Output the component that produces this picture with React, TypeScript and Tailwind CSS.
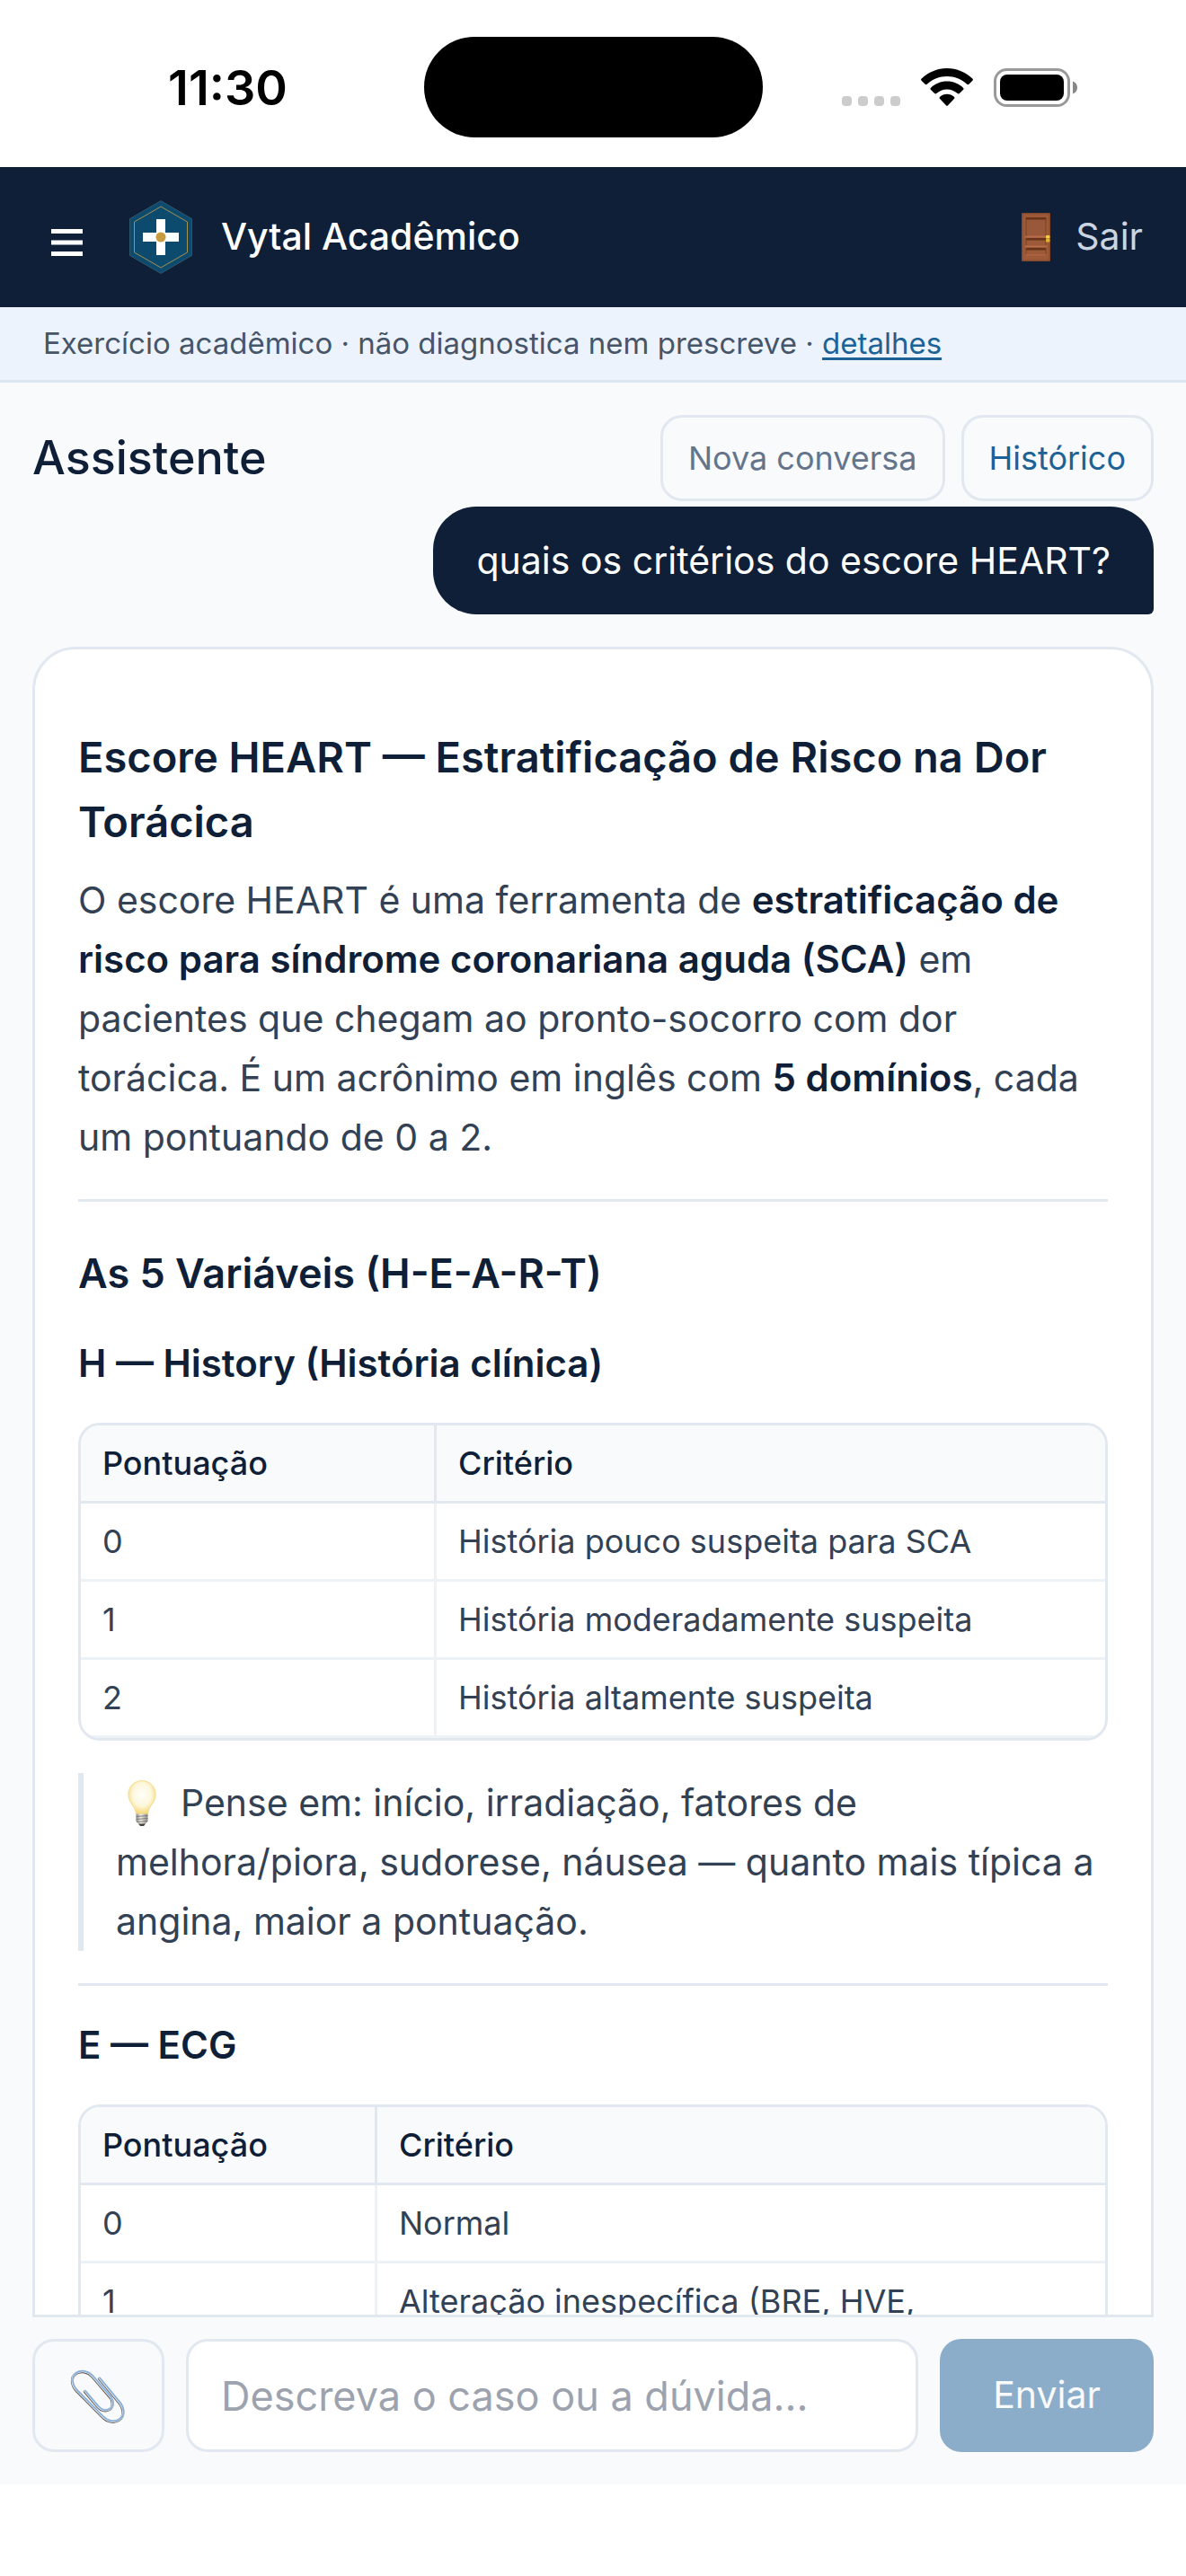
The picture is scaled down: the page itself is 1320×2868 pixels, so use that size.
import { useState } from "react"

type Row = [string, string]

const historyRows: Row[] = [
    ["0", "História pouco suspeita para SCA"],
    ["1", "História moderadamente suspeita"],
    ["2", "História altamente suspeita"],
]

const ecgRows: Row[] = [
    ["0", "Normal"],
    ["1", "Alteração inespecífica (BRE, HVE,"],
]

function StatusBar() {
    return (
        <div className="flex h-[186px] shrink-0 items-center justify-between bg-white pt-2">
            <div className="w-[471px] pl-9 text-center text-[54px] font-semibold text-black">11:30</div>
            <div className="h-[112px] w-[377px] rounded-full bg-black" />
            <div className="flex w-[471px] items-center justify-center gap-[23px] pr-8">
                <svg width="65" height="42" viewBox="0 0 65 42" fill="#cccccc">
                    <rect x="0" y="31" width="11" height="11" rx="4" />
                    <rect x="18" y="31" width="11" height="11" rx="4" />
                    <rect x="36" y="31" width="11" height="11" rx="4" />
                    <rect x="54" y="31" width="11" height="11" rx="4" />
                </svg>
                <svg width="58" height="42" viewBox="0 0 58 42" fill="#000">
                    <path d="M29 0C18 0 8 4.500 0.700 11.500c-.8.800-.8 1.600-.1 2.300l4 4c.6.600 1.500.600 2.200 0C12.800 12.200 20.500 9 29 9s16.200 3.200 22.200 8.800c.7.600 1.600.600 2.200 0l4-4c.7-.7.7-1.500-.1-2.300C50 4.500 40 0 29 0z" />
                    <path d="M29 14.500c-7 0-13.300 2.700-18 7.200-.7.700-.7 1.500 0 2.200l4.200 4.100c.6.600 1.400.600 2.100 0 3.100-2.900 7.200-4.600 11.700-4.600s8.600 1.700 11.700 4.600c.7.600 1.500.600 2.100 0l4.200-4.100c.7-.7.7-1.500 0-2.200-4.700-4.500-11-7.200-18-7.200z" />
                    <path d="M29 28.800c-3 0-5.700 1.100-7.800 2.900-.8.700-.8 1.500-.1 2.200l6.800 7.300c.7.700 1.500.700 2.200 0l6.800-7.300c.7-.7.7-1.500-.1-2.200-2.100-1.800-4.800-2.900-7.800-2.900z" />
                </svg>
                <svg width="94" height="43" viewBox="0 0 94 43">
                    <rect x="1.500" y="1.500" width="82" height="40" rx="13" fill="none" stroke="#999" strokeWidth="3" />
                    <rect x="7" y="7" width="71" height="29" rx="8" fill="#000" />
                    <path d="M88 14.500c3.500 1.200 5 4 5 7s-1.500 5.800-5 7z" fill="#888" />
                </svg>
            </div>
        </div>
    )
}

function Logo() {
    return (
        <svg width="70" height="82" viewBox="0 0 70 82">
            <path d="M35 0.500 69.500 20.500v41L35 81.500 0.500 61.500v-41z" fill="#0c4a6e" stroke="#4a6a7c" strokeWidth="0.600" />
            <path d="M35 7 64.500 24v34L35 75 5.500 58V24z" fill="none" stroke="#a8914f" strokeWidth="1" />
            <path d="M30 21h10v15h15v10H40v15H30V46H15V36h15z" fill="#fff" />
            <circle cx="35" cy="41" r="5.500" fill="#c69c3e" />
        </svg>
    )
}

function DoorIcon() {
    return (
        <svg width="32" height="54" viewBox="0 0 32 54">
            <rect width="32" height="54" rx="1" fill="#88492c" />
            <rect x="1.500" y="1.500" width="29" height="51" fill="#9c5a38" />
            <rect x="5" y="5" width="22" height="21" fill="#99583a" />
            <rect x="5" y="5" width="22" height="2.500" fill="#673319" />
            <rect x="4" y="25.500" width="24" height="2" fill="#b86d49" />
            <rect x="5" y="28" width="22" height="2.500" fill="#673319" />
            <rect x="4" y="36.500" width="24" height="1.500" fill="#b86d49" />
            <rect x="5" y="39" width="22" height="2.500" fill="#673319" />
            <rect x="5" y="46" width="22" height="1.500" fill="#b06542" />
            <path d="M5 5v21M27 5v21M5 28v8M27 28v8M5 39v7M27 39v7" stroke="#75401f" strokeWidth="0.800" />
            <rect x="27" y="25" width="4.500" height="3.500" rx="1" fill="#f4cf3c" />
            <rect x="27" y="29" width="4.500" height="3.500" rx="1" fill="#e0b22c" />
        </svg>
    )
}

function BulbIcon() {
    return (
        <svg className="ml-[13px] mr-[27px] inline-block align-[-11px]" width="32" height="51" viewBox="0 0 32 51">
            <defs>
                <radialGradient id="glass" cx="0.5" cy="0.42" r="0.58">
                    <stop offset="0" stopColor="#fffffa" />
                    <stop offset="0.6" stopColor="#fdf7dc" />
                    <stop offset="1" stopColor="#f4d774" />
                </radialGradient>
                <linearGradient id="screw" x1="0" x2="1" y1="0" y2="0">
                    <stop offset="0" stopColor="#8d8984" />
                    <stop offset="0.4" stopColor="#f0eeea" />
                    <stop offset="1" stopColor="#8d8984" />
                </linearGradient>
            </defs>
            <path d="M16 .5C7.400 .5.800 7.200.8 15.800c0 5.200 2.200 8.600 4.800 12.200 2.400 3.300 3.300 6 3.900 9.500h13c.6-3.500 1.500-6.200 3.900-9.500 2.600-3.600 4.800-7 4.800-12.200C31.200 7.200 24.600.5 16 .5z" fill="url(#glass)" stroke="#f2d987" strokeWidth="0.800" />
            <path d="M9.500 37.500h13v8.500l-3.500 3h-6l-3.500-3z" fill="url(#screw)" />
            <path d="M9.500 40.500l13-1M9.500 43.500l13-1M10 46.500l12-1" stroke="#77736e" strokeWidth="0.900" />
            <path d="M12 48.500h8l-2 2.500h-4z" fill="#45423f" />
        </svg>
    )
}

function ClipIcon() {
    const wire = "M150 83 219 166C233 184 234 208 218 220C200 233 176 227 161 211L73 122C57 104 55 78 72 66C89 55 113 60 127 76L188 147C198 160 197 178 184 186C170 194 155 188 146 178L102 126"
    return (
        <svg width="64" height="64" viewBox="52 45 192 192" fill="none" strokeLinecap="round" strokeLinejoin="round">
            <path d={wire} stroke="#5b5652" strokeWidth="9" transform="translate(-1 2)" />
            <path d={wire} stroke="#dfe5ec" strokeWidth="8" />
            <path d={wire} stroke="#86aedb" strokeWidth="5" transform="translate(1 -1)" />
        </svg>
    )
}

function ScoreTable({ rows, firstCol }: { rows: Row[]; firstCol: string }) {
    return (
        <div className="my-9 overflow-hidden rounded-3xl border-3 border-[#e2e8f0]">
            <table className="w-full border-separate border-spacing-0 text-left text-[36px] leading-[54px]">
                <thead className="bg-[#f8fafc] text-[#0f1f38]">
                    <tr>
                        <th className={`${firstCol} border-r-3 border-b-3 border-[#e2e8f0] px-6 py-[15px] font-medium`}>Pontuação</th>
                        <th className="border-b-3 border-[#e2e8f0] px-6 py-[15px] font-medium">Critério</th>
                    </tr>
                </thead>
                <tbody>
                    {rows.map(([score, text]) => (
                        <tr key={score}>
                            <td className="border-r-3 border-b-3 border-[#edf2f7] px-6 py-[15px]">{score}</td>
                            <td className="border-b-3 border-[#edf2f7] px-6 py-[15px]">{text}</td>
                        </tr>
                    ))}
                </tbody>
            </table>
        </div>
    )
}

function Answer() {
    return (
        <article className="mt-9 rounded-[48px] border-3 border-[#e2e8f0] bg-white px-12 pt-[84px] pb-12 text-[41px] leading-[66px] text-[#334155]">
            <h2 className="mb-[18px] text-[47px] leading-[72px] font-semibold text-[#0f1f38]">
                Escore HEART — Estratificação de Risco na Dor Torácica
            </h2>
            <p>
                O escore HEART é uma ferramenta de <strong className="text-[42px] font-semibold text-[#0f1f38]">estratificação de risco para síndrome coronariana aguda (SCA)</strong> em pacientes que chegam ao pronto-socorro com dor torácica. É um acrônimo em inglês com <strong className="text-[42px] font-semibold text-[#0f1f38]">5 domínios</strong>, cada um pontuando de 0 a 2.
            </p>
            <hr className="my-9 border-t-3 border-[#e2e8f0]" />
            <h3 className="mt-11 mb-[34px] text-[45px] leading-[72px] font-semibold text-[#0f1f38]">As 5 Variáveis (H-E-A-R-T)</h3>
            <h4 className="text-[42px] leading-[60px] font-semibold text-[#0f1f38]">H — History (História clínica)</h4>
            <ScoreTable rows={historyRows} firstCol="w-[396px]" />
            <blockquote className="border-l-6 border-[#e2e8f0] pl-9">
                <BulbIcon />Pense em: início, irradiação, fatores de melhora/piora, sudorese, náusea — quanto mais típica a angina, maior a pontuação.
            </blockquote>
            <hr className="my-9 border-t-3 border-[#e2e8f0]" />
            <h4 className="text-[42px] leading-[60px] font-semibold text-[#0f1f38]">E — ECG</h4>
            <ScoreTable rows={ecgRows} firstCol="w-[330px]" />
        </article>
    )
}

export default function App() {
    const [message, setMessage] = useState("")

    return (
        <div className="flex h-screen flex-col bg-white font-['Inter',sans-serif]">
            <StatusBar />
            <header className="flex h-[156px] shrink-0 items-center bg-[#0f1f38] px-12 text-[41px] text-white">
                <button type="button" aria-label="Menu" className="px-[9px] pt-3">
                    <svg width="35" height="30" viewBox="0 0 35 30" fill="#fff">
                        <path d="M0 0h35v5H0zM0 12.500h35v5H0zM0 25h35v5H0z" />
                    </svg>
                </button>
                <div className="ml-[43px] flex items-center gap-8">
                    <Logo />
                    <span className="font-medium">Vytal Acadêmico</span>
                </div>
                <button type="button" className="ml-auto flex items-center gap-7 text-[#cbd5e1]">
                    <DoorIcon />
                    Sair
                </button>
            </header>
            <div className="flex h-[84px] shrink-0 items-center border-b-3 border-[#dbe6f0] bg-[#ecf3fc] px-12 text-[33px] whitespace-pre text-[#475569]">
                Exercício acadêmico · não diagnostica nem prescreve · <a href="#detalhes" className="text-[#1d6297] underline decoration-3 underline-offset-4">detalhes</a>
            </div>

            <main className="flex min-h-0 flex-1 flex-col bg-[#f8fafc] px-9 pt-9 pb-9">
                <div className="mb-1.5 flex shrink-0 items-center justify-between">
                    <h1 className="text-[52px] leading-[72px] font-medium text-[#0f1f38]">Assistente</h1>
                    <div className="flex gap-[18px] text-[36px]">
                        <button type="button" className="h-24 rounded-3xl border-3 border-[#e2e8f0] px-7 text-[#64748b]">Nova conversa</button>
                        <button type="button" className="h-24 rounded-3xl border-3 border-[#e2e8f0] px-7 text-[#1d6297]">Histórico</button>
                    </div>
                </div>

                <div className="min-h-0 flex-1 overflow-y-auto [scrollbar-width:none]">
                    <div className="ml-auto w-fit rounded-[48px] rounded-br-md bg-[#0f1f38] px-12 py-[27px] text-[41px] leading-[66px] text-white">
                        quais os critérios do escore HEART?
                    </div>
                    <Answer />
                </div>

                <form className="flex shrink-0 gap-6 border-t-3 border-[#e2e8f0] pt-6" onSubmit={(e) => e.preventDefault()}>
                    <button type="button" aria-label="Anexar arquivo" className="flex h-[126px] w-[147px] shrink-0 items-center justify-center rounded-3xl border-3 border-[#e2e8f0]">
                        <ClipIcon />
                    </button>
                    <input
                        type="text"
                        aria-label="Mensagem"
                        value={message}
                        onChange={(e) => setMessage(e.target.value)}
                        placeholder="Descreva o caso ou a dúvida..."
                        className="h-[126px] min-w-0 flex-1 rounded-3xl border-3 border-[#e2e8f0] bg-white px-9 text-[45px] text-[#0f1f38] outline-none placeholder:text-[#9ca3af]"
                    />
                    <button type="submit" className="h-[126px] w-[238px] shrink-0 rounded-3xl bg-[#8cadc9] text-[41px] text-[#f8fafc]">Enviar</button>
                </form>
            </main>
            <div className="h-[102px] shrink-0 bg-white" />
        </div>
    )
}
